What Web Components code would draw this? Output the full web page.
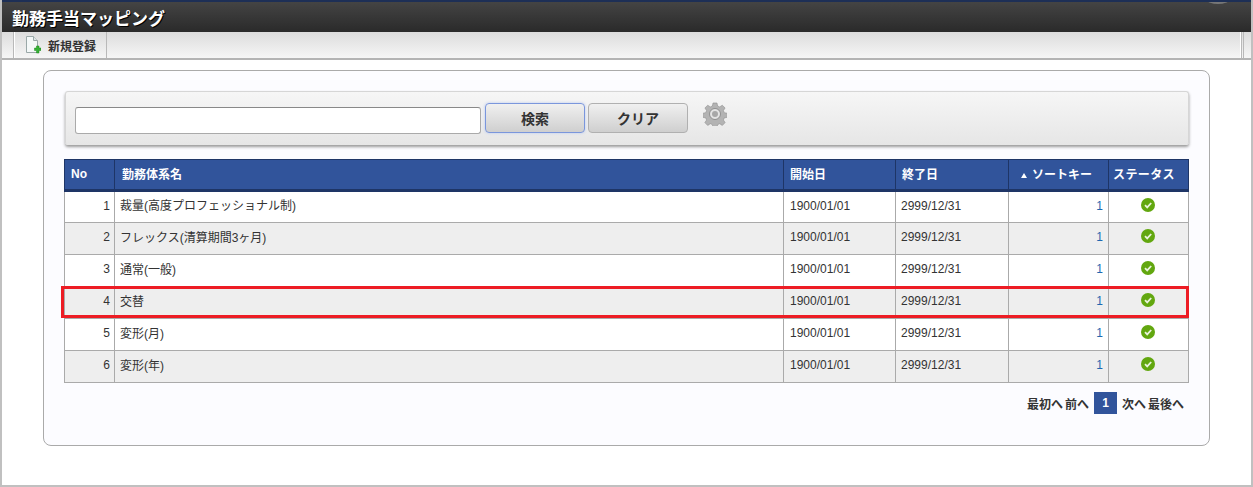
<!DOCTYPE html>
<html lang="ja"><head><meta charset="utf-8"><style>
html,body{margin:0;padding:0;background:#fff}
body{font-family:"Liberation Sans","Noto Sans CJK JP",sans-serif;font-size:12px;color:#333}
</style></head><body>
<app-frame>
  <title-bar slot="top">勤務手当マッピング</title-bar>
  <tool-bar slot="top">新規登録</tool-bar>
  <main-card>
    <search-bar></search-bar>
    <data-table></data-table>
    <pager-bar></pager-bar>
  </main-card>
</app-frame>
<script>
function def(name, html){
  customElements.define(name, class extends HTMLElement{
    constructor(){super();this.attachShadow({mode:'open'}).innerHTML=html;}
  });
}
def('app-frame',`<style>
:host{display:flex;flex-direction:column;box-sizing:border-box;width:1253px;height:487px;border:2px solid #c0c0c0;border-top:0;overflow:hidden;background:#fff}
.body{flex:1;padding:10px 41px 0 41px;}
</style><slot name="top"></slot><div class="body"><slot></slot></div>`);
def('title-bar',`<style>
:host{display:flex;align-items:center;box-sizing:border-box;height:32px;margin:0 -2px;padding:0 0 0 12px;border-top:2px solid #1d2f56;background:linear-gradient(#444,#2a2a2a);color:#fff;font-size:17px;font-weight:bold;text-shadow:1px 1px 0 #000;position:relative;overflow:hidden}
.nub{position:absolute;right:24px;top:-6px;width:22px;height:8px;border-radius:50%;background:#777}
</style><slot></slot><span class="nub"></span>`);
def('tool-bar',`<style>
:host{display:flex;box-sizing:border-box;height:28px;padding-left:11px;border-bottom:2px solid #b4b4b4;background:linear-gradient(#dcdcdc,#f6f6f6);color:#333;font-size:12px;font-weight:bold}
.btn{display:flex;align-items:center;gap:7px;padding:0 10px 0 11px;border-left:1px solid #b9b9b9;border-right:1px solid #b9b9b9;box-shadow:inset 1px 0 0 #fff}
.end{flex:1}
.sep{width:1px;border-left:1px solid #b9b9b9;border-right:1px solid #b9b9b9;margin-right:7px;box-shadow:-1px 0 0 #fff}
svg{display:block}
</style><div class="btn"><svg width="16" height="18" viewBox="0 0 16 18"><path d="M1.500.5H8.500L12.500 4.500V16.500H1.500Z" fill="#f4f8f8" stroke="#9aa8a8"/><path d="M8.500.5V4.500H12.500" fill="#dfe6e6" stroke="#9aa8a8"/><path d="M9.500 12h2v-2h2.500v2h2v2.500h-2v2.500h-2.500v-2.500h-2z" fill="#35b035" stroke="#1f8a1f" stroke-width=".5"/></svg><slot></slot></div><div class="end"></div><div class="sep"></div>`);
def('main-card',`<style>
:host{display:block;box-sizing:border-box;width:1167px;height:376px;border:1px solid #aaa;border-radius:8px;background:#fcfcff;padding:20px 20px 0 20px}
</style><slot></slot>`);
def('search-bar',`<style>
:host{display:flex;align-items:center;box-sizing:border-box;width:1124px;height:54px;margin-left:1px;padding:0 0 0 10px;border:1px solid #d6d6d6;border-bottom:0;border-radius:3px;background:linear-gradient(#f6f6f6,#e6e6e6);box-shadow:0 2px 3px #999}
input{box-sizing:border-box;width:406px;height:27px;border:1px solid #aaa;border-top-color:#888;border-radius:3px;background:#fff;margin:4px 4px 0 -1px;padding:0;outline:0}
button{box-sizing:border-box;width:100px;height:30px;border:1px solid #b0b0b0;border-radius:4px;background:linear-gradient(#f0f0f0,#cfcfcf);font:bold 14px "Liberation Sans","Noto Sans CJK JP",sans-serif;color:#333;padding:0;margin:-1px 3px 0 0}
button.a{border-color:#7a96dc;box-shadow:0 0 3px #b8c8f0}
svg{margin:-9px 0 0 12px;display:block}
</style><input type="text"><button class="a">検索</button><button>クリア</button>
<svg width="24" height="24" viewBox="0 0 24 24"><path fill="#b3b3b3" stroke="#8f8f8f" stroke-width=".6" d="M10 1h4l.6 3 2.100.9 2.600-1.700 2.800 2.800-1.700 2.600.9 2.100 3 .6v4l-3 .6-.9 2.100 1.700 2.600-2.800 2.800-2.600-1.700-2.100.9-.6 3h-4l-.6-3-2.100-.9-2.600 1.700-2.800-2.800 1.700-2.600-.9-2.100-3-.6v-4l3-.6.9-2.100-1.700-2.600 2.800-2.800 2.600 1.700 2.100-.9z"/><circle cx="12" cy="12" r="5.500" fill="#e4e4e4" stroke="#8f8f8f"/><circle cx="12" cy="12" r="3" fill="#a8a8a8"/></svg>`);
const rows=[['1','裁量(高度プロフェッショナル制)'],['2','フレックス(清算期間3ヶ月)'],['3','通常(一般)'],['4','交替'],['5','変形(月)'],['6','変形(年)']];
const ok=`<svg width="14" height="14" viewBox="0 0 14 14"><circle cx="7" cy="7" r="7" fill="#62a70f"/><path d="M4 7.200l2.200 2.200L10.200 5" fill="none" stroke="#e9f3dc" stroke-width="1.800"/></svg>`;
def('data-table',`<style>
:host{display:block;position:relative;width:1125px;margin:14px 0 0 0}
table{border-collapse:collapse;table-layout:fixed;width:1124px;font-size:12px;color:#333}
th{height:31px;background:#31549b;color:#fff;font-weight:bold;text-align:left;padding:0 0 2px 7px;border:1px solid #1e3566;border-bottom:3px solid #1e3566;box-sizing:border-box;white-space:nowrap}
th.d{padding-left:6px}
th.st{padding-left:4px;letter-spacing:.4px}
td{height:32px;box-sizing:border-box;border:1px solid #aaa;padding:0 6px 3px;background:#fff;white-space:nowrap}
tr:nth-child(even) td{background:#eee}
.r{text-align:right}.n{padding-right:4px}.l{color:#1f68b0;padding-right:5px}
.e{padding-left:5px}
.name{padding:0 0 5px 5px}
.c{text-align:center;padding:0}.c svg{display:block;margin:-5px auto 0;position:relative;left:-1px}
.hl{position:absolute;left:-3px;top:127px;width:1128px;height:32px;box-sizing:border-box;border:3px solid #ed1c24;pointer-events:none}
.tri{display:inline-block;width:0;height:0;border:3.500px solid transparent;border-top:0;border-bottom:5px solid #fff;margin:0 5px 1px 4px}
</style><table><colgroup><col style="width:50px"><col style="width:669px"><col style="width:112px"><col style="width:113px"><col style="width:100px"><col style="width:80px"></colgroup>
<thead><tr><th class="d">No</th><th>勤務体系名</th><th class="d">開始日</th><th class="d">終了日</th><th style="padding-left:8px"><span class="tri"></span>ソートキー</th><th class="st">ステータス</th></tr></thead><tbody>
${rows.map(r=>`<tr><td class="r n">${r[0]}</td><td class="name">${r[1]}</td><td>1900/01/01</td><td class="e">2999/12/31</td><td class="r l">1</td><td class="c">${ok}</td></tr>`).join('')}
</tbody></table><div class="hl"></div>`);
def('pager-bar',`<style>
:host{display:flex;justify-content:flex-end;align-items:center;gap:5px;width:1120px;height:22px;margin-top:9px;font-size:12px;font-weight:bold;color:#333}
b{display:block;width:23px;height:22px;line-height:22px;text-align:center;background:#31549b;color:#fff}
</style><span>最初へ</span><span style="margin-left:-3px">前へ</span><b>1</b><span>次へ</span><span style="margin-left:-3px">最後へ</span>`);
</script></body></html>
